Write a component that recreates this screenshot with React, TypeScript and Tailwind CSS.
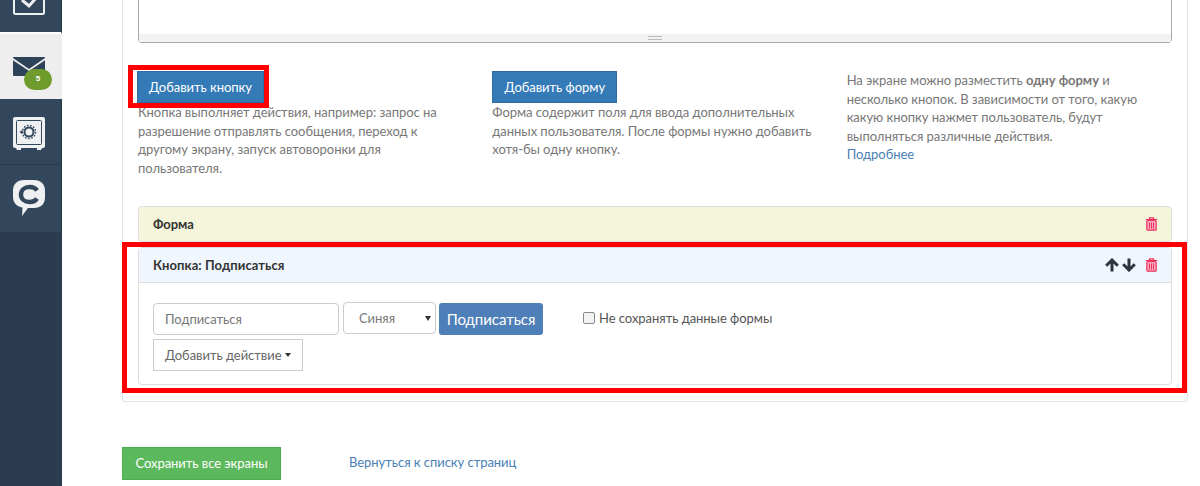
import React from "react";

const TrashIcon = () => (
  <svg width="13" height="14" viewBox="0 0 13 14" fill="none">
    <path d="M4.500 2V.8h4V2M.8 2.500h11.400" stroke="#f0325f" strokeWidth="1.200" />
    <rect x="1.800" y="3.500" width="9.400" height="9.700" rx="1" fill="#f9a8c0" stroke="#f0325f" strokeWidth="1.200" />
    <path d="M4.500 5.500v6M6.500 5.500v6M8.500 5.500v6" stroke="#f0325f" strokeWidth="1" />
  </svg>
);

const ArrowUpIcon = () => (
  <svg width="14" height="14" viewBox="0 0 14 14" fill="none">
    <path d="M1.200 7.800 7 2l5.800 5.800M7 2.500V13.500" stroke="#2b3440" strokeWidth="3" />
  </svg>
);

const ArrowDownIcon = () => (
  <svg width="14" height="14" viewBox="0 0 14 14" fill="none">
    <path d="M1.200 6.200 7 12l5.800-5.800M7 11.500V.5" stroke="#2b3440" strokeWidth="3" />
  </svg>
);

const Sidebar = () => (
  <div className="flex h-full w-[62px] shrink-0 flex-col bg-[#2b3c50]">
    <div className="flex h-[34px] items-end overflow-hidden border-r border-b-2 border-r-[#263646] border-b-white bg-[#33475c] pb-[17px] pl-[13px]">
      <svg width="32" height="32" viewBox="0 0 32 32" fill="none" className="shrink-0">
        <rect x="1" y="1" width="30" height="30" rx="1.500" stroke="#eef0f2" strokeWidth="2" />
        <path d="M9 17l7 6 8-9" stroke="#eef0f2" strokeWidth="3" />
      </svg>
    </div>
    <div className="relative flex h-[65px] bg-[#eeeeee] pt-[23px] pl-[13px]">
      <svg width="32" height="19" viewBox="0 0 32 19">
        <path d="M1 0h30c.6 0 1 .4 1 1L16 12 0 1c0-.6.4-1 1-1Z" fill="#2f4358" />
        <path d="M0 3.200 16 14 32 3.200V18a1 1 0 0 1-1 1H1a1 1 0 0 1-1-1Z" fill="#2f4358" />
      </svg>
      <span className="absolute top-[35px] left-[24px] flex h-[21px] w-[28px] items-center justify-center rounded-[11px] bg-[#6f9b2c] font-['Liberation_Sans',sans-serif] text-[8px] font-bold text-white">
        5
      </span>
    </div>
    <div className="flex h-[66px] border-r border-b border-r-[#263646] border-b-[#2b3c50] bg-[#33475c] pt-[18px] pl-[13px]">
      <svg width="32" height="33" viewBox="0 0 32 33" fill="none">
        <rect x="0" y="0" width="32" height="31" rx="2" fill="#eef0f2" />
        <rect x="3.500" y="3.500" width="25" height="24" rx="1" stroke="#33475c" strokeWidth="1" />
        <path d="M3 31h5v2H4zM24 31h5l-1 2h-4z" fill="#eef0f2" />
        <circle cx="16" cy="15" r="4.500" stroke="#33475c" strokeWidth="2" />
        <circle cx="16" cy="15" r="6.600" stroke="#33475c" strokeWidth="1.400" strokeDasharray="1.600 1.600" />
        <path d="M6.500 15l3-2.200v4.400z" fill="#33475c" />
      </svg>
    </div>
    <div className="flex h-[67px] border-r border-r-[#263646] bg-[#33475c] pt-[15px] pl-[13px]">
      <svg width="32" height="37" viewBox="0 0 32 37" fill="none">
        <path
          d="M11 0h10c7 0 11 4 11 11v6c0 7-4 11-11 11h-6l-6 8 .5-8.400C3.500 26.500 0 22.500 0 17v-6C0 4 4 0 11 0Z"
          fill="#eef0f2"
        />
        <path d="M24 10.500c-1.500-2.500-4-3.500-7.500-3.500C11.500 7 8 10 8 14.500S11.500 22 16.500 22c3.500 0 6-1 7.500-3.500" stroke="#33475c" strokeWidth="4.400" />
      </svg>
    </div>
  </div>
);

const Col = ({ children }: { children: React.ReactNode }) => (
  <div className="pr-[15px] whitespace-nowrap">{children}</div>
);

export default function App() {
  return (
    <div className="relative flex h-[486px] w-[1200px] overflow-hidden bg-white font-['Lato',sans-serif] text-[13px] leading-[18.57px] tracking-[-0.04px] text-[#777777]">
      <Sidebar />
      <div className="ml-[60px] w-[1066px]">
        <div className="h-[402px] rounded-b-[4px] border-x border-b border-[#e3e3e3] px-[15px]">
          <div className="relative h-[43px] rounded-b-[4px] border-x border-b border-[#a9a9a9]">
            <div className="absolute inset-x-0 bottom-0 flex h-[8px] items-center justify-center bg-[#f2f2f2]">
              <div className="h-[4px] w-[14px] border-y border-[#bbbbbb]" />
            </div>
          </div>

          <div className="mt-[28px] grid h-[105px] w-[1063px] grid-cols-3">
            <Col>
              <button className="-ml-px flex h-[32px] w-[127px] items-center justify-center border border-[#2e6da4] bg-[#337ab7] text-white">
                Добавить кнопку
              </button>
              Кнопка выполняет действия, например: запрос на
              <br />
              разрешение отправлять сообщения, переход к
              <br />
              другому экрану, запуск автоворонки для
              <br />
              пользователя.
            </Col>
            <Col>
              <button className="flex h-[32px] w-[125px] items-center justify-center border border-[#2e6da4] bg-[#337ab7] text-white">
                Добавить форму
              </button>
              Форма содержит поля для ввода дополнительных
              <br />
              данных пользователя. После формы нужно добавить
              <br />
              хотя-бы одну кнопку.
            </Col>
            <Col>
              На экране можно разместить <b className="font-bold">одну форму</b> и
              <br />
              несколько кнопок. В зависимости от того, какую
              <br />
              какую кнопку нажмет пользователь, будут
              <br />
              выполняться различные действия.
              <br />
              <a className="text-[#4a7fb5]">Подробнее</a>
            </Col>
          </div>

          <div className="mt-[30px] flex h-[36px] items-center justify-between rounded-[4px] border border-[#dddddd] bg-[#f5f5dc] pr-[13px] pl-[14px]">
            <b className="font-bold text-[#333333]">Форма</b>
            <TrashIcon />
          </div>

          <div className="mt-[5px] h-[138px] rounded-[4px] border border-[#dddddd]">
            <div className="flex h-[35px] items-center justify-between border-b border-[#dddddd] bg-[#eff6fd] pr-[13px] pl-[14px]">
              <b className="font-bold tracking-[0.08px] text-[#333333]">Кнопка: Подписаться</b>
              <div className="flex items-center gap-[3px]">
                <ArrowUpIcon />
                <ArrowDownIcon />
                <span className="ml-[6px] flex">
                  <TrashIcon />
                </span>
              </div>
            </div>
            <div className="flex items-start pt-[20px] pl-[14px]">
              <div className="w-[424px]">
                <div className="flex items-start">
                  <div className="flex h-[32px] w-[186px] items-center rounded-[4px] border border-[#cccccc] px-[11px]">
                    Подписаться
                  </div>
                  <div className="relative -mt-px ml-[4px] flex h-[32px] w-[93px] items-center rounded-[4px] border border-[#cccccc] pl-[15px]">
                    Синяя
                    <span className="absolute top-[13px] right-[4px] h-0 w-0 border-x-[3px] border-t-[5px] border-x-transparent border-t-[#333333]" />
                  </div>
                  <button className="ml-[3px] h-[32px] w-[104px] rounded-[3px] bg-[#4f7fb8] text-[15px] text-white">
                    Подписаться
                  </button>
                </div>
                <button className="mt-[4px] flex h-[32px] w-[150px] items-center border border-[#cccccc] pl-[11px] text-[#666666]">
                  Добавить действие
                  <span className="ml-[3px] h-0 w-0 border-x-[3.5px] border-t-[4px] border-x-transparent border-t-[#333333]" />
                </button>
              </div>
              <label className="mt-[6px] ml-[6px] flex items-center gap-[4px] text-[#555555]">
                <span className="h-[12px] w-[12px] rounded-[2px] border border-[#8a8a8a] bg-[#f3f3f3]" />
                Не сохранять данные формы
              </label>
            </div>
          </div>
        </div>

        <div className="mt-[45px] flex items-start">
          <button className="flex h-[33px] w-[159px] items-center justify-center border border-[#4cae4c] bg-[#5cb85c] text-white">
            Сохранить все экраны
          </button>
          <a className="mt-[6px] ml-[68px] text-[#4a7fb5]">Вернуться к списку страниц</a>
        </div>
      </div>

      {/* red marks over the screenshot */}
      <div className="absolute top-[65px] left-[128px] h-[43px] w-[141px] border-[5px] border-[#ff0000]" />
      <div className="absolute top-[242px] left-[122px] h-[151px] w-[1065px] border-[5px] border-[#ff0000]" />
    </div>
  );
}
